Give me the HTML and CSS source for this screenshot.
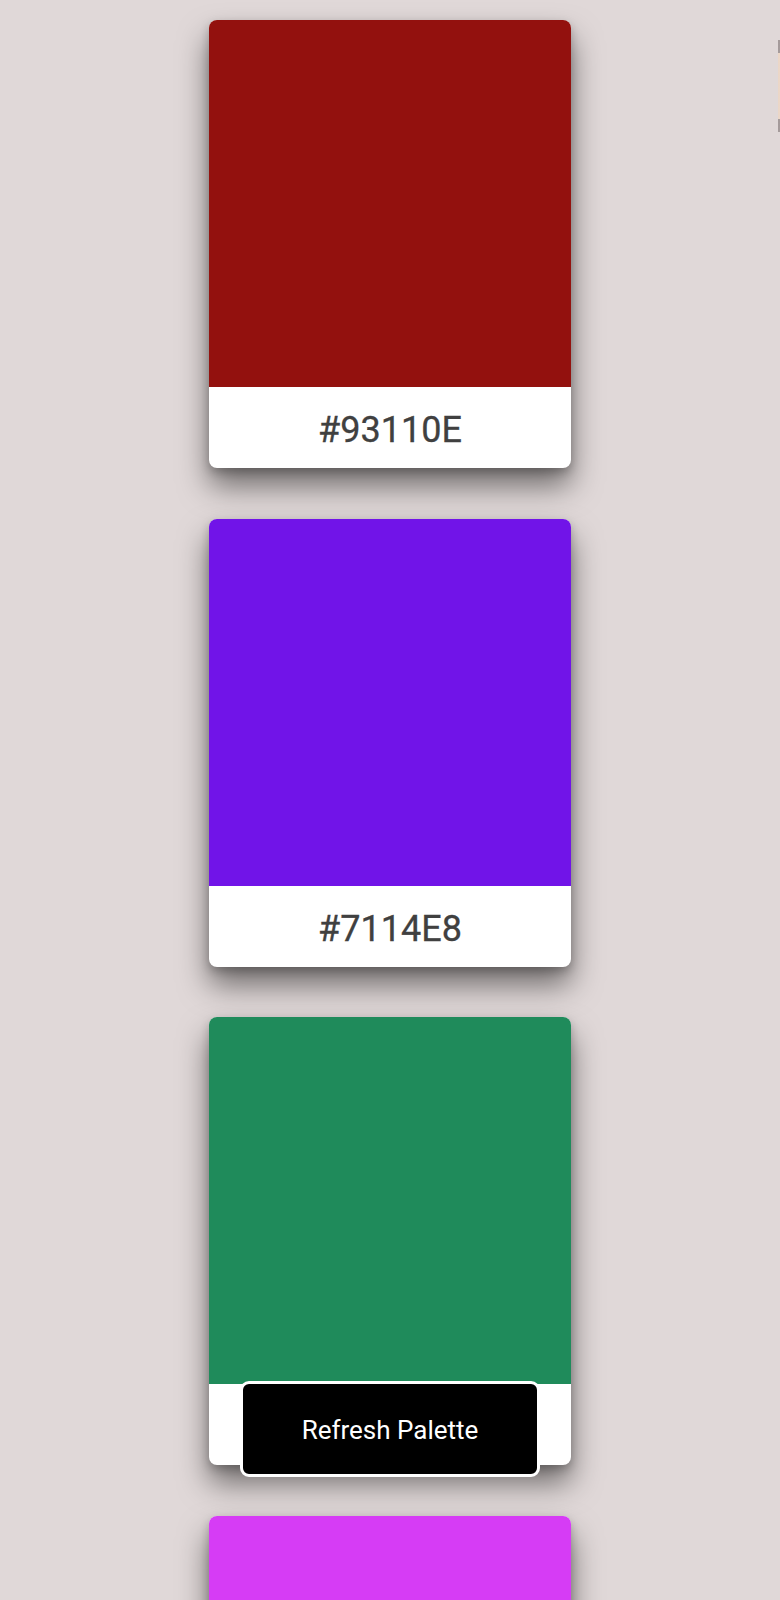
FILE: index.html
```html
<!DOCTYPE html>
<html lang="en">
<head>
<meta charset="utf-8">
<title>Palette</title>
<link rel="stylesheet" href="styles.css">
</head>
<body>
<main class="palette">
  <div class="card">
    <div class="swatch swatch-red"></div>
    <div class="label">#93110E</div>
  </div>
  <div class="card">
    <div class="swatch swatch-purple"></div>
    <div class="label">#7114E8</div>
  </div>
  <div class="card">
    <div class="swatch swatch-green"></div>
    <div class="label">#1F8B5B</div>
  </div>
  <div class="card">
    <div class="swatch swatch-magenta"></div>
    <div class="label">#D63CF5</div>
  </div>
</main>
<button class="refresh">Refresh Palette</button>
<div class="edge-strip"></div>
</body>
</html>
```
FILE: styles.css
```css
html, body {
  margin: 0;
  padding: 0;
  background: #e0d8d8;
  font-family: Roboto, "Noto Sans", "Liberation Sans", sans-serif;
}

.palette {
  display: flex;
  flex-direction: column;
  align-items: center;
  gap: 50.5px;
  padding-top: 20px;
  padding-bottom: 60px;
}

.card {
  width: 362px;
  border-radius: 8px;
  overflow: hidden;
  background: #ffffff;
  box-shadow: 0 18px 30px rgba(0, 0, 0, 0.5), 0 4px 10px rgba(0, 0, 0, 0.22);
  display: flex;
  flex-direction: column;
  flex-shrink: 0;
}

.swatch {
  height: 367px;
}

.swatch-red { background: #93110e; }
.swatch-purple { background: #7114e8; }
.swatch-green { background: #1f8b5b; }
.swatch-magenta { background: #d63cf5; }

.label {
  height: 81px;
  box-sizing: border-box;
  padding-top: 5px;
  display: flex;
  align-items: center;
  justify-content: center;
  font-size: 36px;
  font-weight: 400;
  color: #404040;
  -webkit-text-stroke: 0.3px #404040;
}

.refresh {
  position: fixed;
  left: 240px;
  bottom: 123px;
  width: 300px;
  height: 96px;
  box-sizing: border-box;
  background: #000000;
  color: #ffffff;
  border: 3px solid #ffffff;
  border-radius: 9px;
  font-family: Roboto, "Noto Sans", "Liberation Sans", sans-serif;
  font-size: 26px;
  padding: 0;
  padding-top: 2px;
}

.edge-strip {
  position: fixed;
  right: 0;
  top: 40px;
  width: 2px;
  height: 92px;
  background: linear-gradient(#8a8080 0 14%, #efd6c0 14% 86%, #8a8080 86%);
  opacity: 0.7;
}
```
